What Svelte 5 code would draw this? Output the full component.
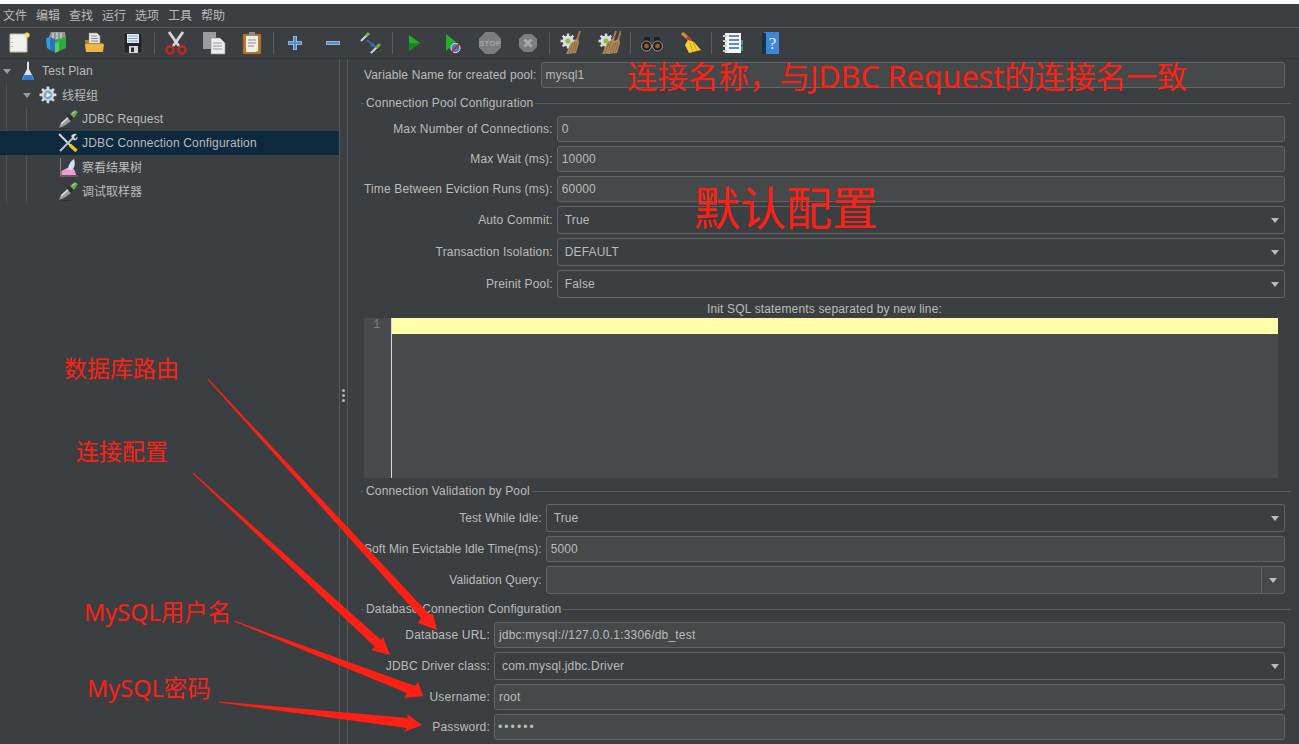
<script lang="ts">
  const menus = ['文件', '编辑', '查找', '运行', '选项', '工具', '帮助'];

  const poolRows = [
    { label: 'Max Number of Connections:', value: '0' },
    { label: 'Max Wait (ms):', value: '10000' },
    { label: 'Time Between Eviction Runs (ms):', value: '60000' },
    { label: 'Auto Commit:', value: 'True', select: true },
    { label: 'Transaction Isolation:', value: 'DEFAULT', select: true },
    { label: 'Preinit Pool:', value: 'False', select: true }
  ];

  const validationRows = [
    { label: 'Test While Idle:', value: 'True', select: true },
    { label: 'Soft Min Evictable Idle Time(ms):', value: '5000' },
    { label: 'Validation Query:', value: '', select: true, editable: true }
  ];

  const databaseRows = [
    { label: 'Database URL:', value: 'jdbc:mysql://127.0.0.1:3306/db_test' },
    { label: 'JDBC Driver class:', value: 'com.mysql.jdbc.Driver', select: true },
    { label: 'Username:', value: 'root' },
    { label: 'Password:', value: '••••••', secret: true }
  ];

  const arrows = [
    '208,378.5 429,614 433,614 437,630 418,623 421,618 207.5,379.5',
    '193,472.5 381,640 383,637 390,655 371,650 375,647 192.5,473.5',
    '234,620.5 415,686 418,682 423,696 404,698 407,693 234,621.5',
    '219,701.5 408,718 407,714 422,725 404,732 407,728 219,702.5'
  ];
</script>

{#snippet dropper()}
  <svg class="tree-icon" viewBox="0 0 20 20">
    <path d="M1 20 Q8 18 14 20 Z" fill="#2e3032" />
    <path d="M1 19 L3 14 L9 8 L13 12 L6 17 Z" fill="#9b9d9e" />
    <path d="M3 15 L10 9" stroke="#e4e4e4" stroke-width="1.2" />
    <path d="M9 7 L11 5 L15 9 L13 12 Z" fill="#2c2e30" />
    <path d="M12 5 L17 1 L20 3 L16 9 Z" fill="#68a84f" />
    <path d="M14 5 L17 2.5" stroke="#a6d58e" stroke-width="1.2" />
  </svg>
{/snippet}

{#snippet gear(color = '#d9dcde')}
  <g fill={color}>
    <circle cx="8" cy="8" r="5.5" />
    <g stroke={color} stroke-width="2.4">
      <path d="M8 0.5V15.5M0.5 8H15.5M2.7 2.7L13.3 13.3M13.3 2.7L2.7 13.3" />
    </g>
  </g>
{/snippet}

{#snippet broom(x = 0)}
  <g transform="translate({x} 0)">
    <path d="M21 0 L18 9" stroke="#a07c50" stroke-width="2" />
    <path d="M12 12 L19 7 L20 12 L17 22 L7 23 Z" fill="#b08a5a" />
    <path d="M10 22 L14 12M13 22 L16 11M15.5 21 L18 11" stroke="#8a6a42" stroke-width="1" />
  </g>
{/snippet}

<div class="app">
  <div class="menubar">
    {#each menus as m}
      <span class="menu-item">{m}</span>
    {/each}
  </div>

  <div class="toolbar">
    <span class="tool">
      <svg viewBox="0 0 24 24">
        <path d="M3 3H20V21H3Z" fill="#f2f2ea" stroke="#bdbdb0" />
        <path d="M5 7V8M5 11V12M5 15V16" stroke="#8f8f8f" />
        <circle cx="20" cy="4" r="2.6" fill="#f5dc60" />
      </svg>
    </span>
    <span class="tool">
      <svg viewBox="0 0 24 24">
        <path d="M4 6 L6 1 L20 1 L21 8 L21 12 L4 12 Z" fill="#8e9699" />
        <path d="M8 2 L8 8M12 1.5 L12 8M16 2 L16 8" stroke="#c8cdcf" stroke-width="1.4" />
        <path d="M1 7 L5 6 L5 19 L2 17 Z" fill="#2f9fdc" />
        <path d="M5 6 L10 8 L10 21 L5 19 Z" fill="#2f6fc0" />
        <path d="M10 9 L21 6 L21 17 L10 22 Z" fill="#2cab3e" />
        <path d="M10 12 L14 11 V20 L10 22 Z" fill="#56cc62" />
      </svg>
    </span>
    <span class="tool">
      <svg viewBox="0 0 24 24">
        <path d="M6 2H14L17 5V14H6Z" fill="#e8e8e8" stroke="#8e8e8e" stroke-width=".6" />
        <path d="M8 5H14M8 7.5H15M8 10H15" stroke="#8a8a8a" />
        <path d="M2 9H6V12H20V21H3Z" fill="#b9821f" />
        <path d="M2 13H21L20 21H3Z" fill="#eab64a" />
      </svg>
    </span>
    <span class="tool">
      <svg viewBox="0 0 24 24">
        <path d="M3 2H19L21 4V22H3Z" fill="#232426" stroke="#55585a" stroke-width=".6" />
        <path d="M6 3H18V12H6Z" fill="#e8eef4" />
        <path d="M7 5H17M7 7.5H17M7 10H17" stroke="#7fa2cf" />
        <path d="M8 15H17V22H8Z" fill="#d6d9db" />
        <path d="M10 16.5H13V21H10Z" fill="#2c2e30" />
      </svg>
    </span>
    <span class="sep"></span>
    <span class="tool">
      <svg viewBox="0 0 24 24">
        <path d="M5 1 L12 11 L15 15M19 1 L12 11 L9 15" stroke="#d6d6d6" stroke-width="2.8" fill="none" />
        <circle cx="6" cy="19" r="3.6" fill="none" stroke="#d6211f" stroke-width="2.2" />
        <circle cx="18" cy="19" r="3.6" fill="none" stroke="#d6211f" stroke-width="2.2" />
      </svg>
    </span>
    <span class="tool">
      <svg viewBox="0 0 24 24">
        <path d="M1 1H14V18H1Z" fill="#9a9c9e" />
        <path d="M9 7H18L23 12V23H9Z" fill="#ececec" stroke="#8f8f8f" stroke-width=".6" />
        <path d="M11 12H20M11 15H20M11 18H20" stroke="#9a9a9a" />
      </svg>
    </span>
    <span class="tool">
      <svg viewBox="0 0 24 24">
        <path d="M3 3H21V23H3Z" fill="#b87a2c" stroke="#7d5320" stroke-width=".6" />
        <path d="M9 1H15V5H9Z" fill="#8f8f8f" />
        <path d="M6 5H18V20L15 21H6Z" fill="#efefe8" />
        <path d="M8 9H16M8 12H16M8 15H14" stroke="#8a8a8a" />
      </svg>
    </span>
    <span class="sep"></span>
    <span class="tool">
      <svg viewBox="0 0 24 24">
        <path d="M12 5V19M5 12H19" stroke="#b9d4f0" stroke-width="3.6" />
        <path d="M12 5.5V18.5M5.5 12H18.5" stroke="#4a8fd4" stroke-width="2" />
      </svg>
    </span>
    <span class="tool">
      <svg viewBox="0 0 24 24">
        <path d="M5 12H19" stroke="#b9d4f0" stroke-width="3.6" />
        <path d="M5.5 12H18.5" stroke="#4a8fd4" stroke-width="2" />
      </svg>
    </span>
    <span class="tool">
      <svg viewBox="0 0 24 24">
        <path d="M2 10 L9 3" stroke="#d5d5d5" stroke-width="2" />
        <path d="M7 5 L10 2" stroke="#6fae5a" stroke-width="3" />
        <path d="M12 22 L19 15" stroke="#d5d5d5" stroke-width="2" />
        <path d="M17 17 L21 13" stroke="#6fae5a" stroke-width="3" />
        <path d="M8 9 L15 15" stroke="#2f78d0" stroke-width="1.6" />
        <path d="M16 16 L11.5 15 L15 11.5 Z" fill="#2f78d0" />
      </svg>
    </span>
    <span class="sep"></span>
    <span class="tool">
      <svg viewBox="0 0 24 24"><path d="M7 4 L18 12 L7 20 Z" fill="#22b02c" /><path d="M7 12 L18 12 L7 20 Z" fill="#0f8a1c" /></svg>
    </span>
    <span class="tool">
      <svg viewBox="0 0 24 24">
        <path d="M6 3 L16 11 L6 20 Z" fill="#22b02c" />
        <circle cx="15.5" cy="17" r="4.6" fill="#3f7fd0" stroke="#e8e8e8" />
        <path d="M12 20.5 L19 13.5" stroke="#d82420" stroke-width="1.8" />
      </svg>
    </span>
    <span class="tool">
      <svg viewBox="0 0 24 24">
        <path d="M7.5 1H16.5L23 7.5V16.5L16.5 23H7.5L1 16.5V7.5Z" fill="#7b7d7e" />
        <text x="12" y="15" class="stop-text">STOP</text>
      </svg>
    </span>
    <span class="tool">
      <svg viewBox="0 0 24 24">
        <path d="M8 3H16L21 8V16L16 21H8L3 16V8Z" fill="#7b7d7e" />
        <path d="M8.5 8.5L15.5 15.5M15.5 8.5L8.5 15.5" stroke="#a8a9aa" stroke-width="3" />
      </svg>
    </span>
    <span class="sep"></span>
    <span class="tool">
      <svg viewBox="0 0 24 24">
        <g transform="translate(1 2)">{@render gear()}</g>
        <circle cx="9" cy="10" r="2.6" fill="#8ebd3f" />
        {@render broom()}
      </svg>
    </span>
    <span class="tool">
      <svg viewBox="0 0 24 24">
        <g transform="translate(1 2)">{@render gear()}</g>
        <circle cx="9" cy="10" r="2.6" fill="#8ebd3f" />
        {@render broom(-2)}
        {@render broom(3)}
      </svg>
    </span>
    <span class="sep"></span>
    <span class="tool">
      <svg viewBox="0 0 24 24">
        <path d="M5 6H10V12H14V6H19L23 15H1Z" fill="#1f2021" />
        <circle cx="6.5" cy="15" r="5" fill="#1e1f20" stroke="#9a9a9a" />
        <circle cx="17.5" cy="15" r="5" fill="#1e1f20" stroke="#9a9a9a" />
        <circle cx="6.5" cy="15" r="2.4" fill="#9c5a2e" />
        <circle cx="17.5" cy="15" r="2.4" fill="#9c5a2e" />
      </svg>
    </span>
    <span class="tool">
      <svg viewBox="0 0 24 24">
        <path d="M4 2 L12 9" stroke="#c9913c" stroke-width="3.4" />
        <path d="M9 6 L14 11" stroke="#c8312c" stroke-width="3" />
        <path d="M10 9 L16 11 L23 19 L11 22 L7 14 Z" fill="#f2d230" />
        <path d="M12 12 L15 21M15 11 L19 20" stroke="#c9a51e" />
      </svg>
    </span>
    <span class="sep"></span>
    <span class="tool">
      <svg viewBox="0 0 24 24">
        <path d="M4 2H20V22H4Z" fill="#f4f6f8" />
        <path d="M20 9H22V14H20Z" fill="#3f8ed0" />
        <path d="M20 15H22V20H20Z" fill="#3da04a" />
        <path d="M2 5H6M2 10H6M2 15H6M2 20H6" stroke="#cfcfcf" stroke-width="2" />
        <path d="M8 5H18M8 9H18M8 13H18M8 17H18" stroke="#2f67b8" stroke-width="1.4" />
      </svg>
    </span>
    <span class="tool">
      <svg viewBox="0 0 24 24">
        <path d="M5 1H20V23H5Z" fill="#3f86d8" />
        <path d="M3 2H7V23H3Z" fill="#16304f" />
        <text x="13.5" y="18" class="help-text">?</text>
      </svg>
    </span>
  </div>

  <div class="main">
    <div class="tree">
      <div class="guide g1"></div>
      <div class="guide g2"></div>
      <div class="tree-row lv0">
        <span class="caret"></span>
        <svg class="tree-icon" viewBox="0 0 20 20">
          <path d="M10 0 L11 1 V8 L16 18 Q16 19 15 19 H5 Q4 19 4 18 L9 8 V2 Z" fill="#dfe3e6" />
          <path d="M6.5 14 H13.5 L16 18 Q16 19 15 19 H5 Q4 19 4 18 Z" fill="#2f78d0" />
        </svg>
        <span>Test Plan</span>
      </div>
      <div class="tree-row lv1">
        <span class="caret"></span>
        <svg class="tree-icon" viewBox="0 0 20 20">
          <g transform="translate(1 1) scale(1.12)">{@render gear()}</g>
          <circle cx="10" cy="10" r="4.4" fill="#7fa6cc" />
          <path d="M8.5 7.5 L13 10 L8.5 12.5 Z" fill="#f2f5f8" />
        </svg>
        <span class="zh">线程组</span>
      </div>
      <div class="tree-row lv2">{@render dropper()}<span>JDBC Request</span></div>
      <div class="tree-row lv2 selected">
        <svg class="tree-icon" viewBox="0 0 20 20">
          <path d="M1 1 L13 13" stroke="#e2e2e2" stroke-width="1.8" />
          <path d="M2 18 L15 5" stroke="#b9bbbc" stroke-width="2.2" />
          <path d="M13 3 Q15 0 19 1 L16 4 L17 6 L19.5 3.5 Q20 7 16 7.5 Z" fill="#d8d8d8" />
          <path d="M12 12 L18.5 18" stroke="#f0c419" stroke-width="3.4" />
        </svg>
        <span>JDBC Connection Configuration</span>
      </div>
      <div class="tree-row lv2">
        <svg class="tree-icon" viewBox="0 0 20 20">
          <path d="M2.5 1 V19 H20" stroke="#7f8182" fill="none" />
          <path d="M3.5 18 V14 L9 11 L14 10 L17 14 L18 18 Z" fill="#f29ad8" />
          <path d="M10 12 Q11 5 16 2 Q18 8 15 12 Q12 14 10 12 Z" fill="#cfe0f5" />
        </svg>
        <span class="zh">察看结果树</span>
      </div>
      <div class="tree-row lv2">{@render dropper()}<span class="zh">调试取样器</span></div>
    </div>

    <div class="splitter"><i></i><i></i><i></i></div>

    <div class="config">
      <div class="field-row top">
        <span class="label">Variable Name for created pool:</span>
        <span class="field">mysql1</span>
      </div>

      <div class="section-title"><span>Connection Pool Configuration</span></div>
      <div class="form-grid">
        {#each poolRows as r}
          <span class="label">{r.label}</span>
          {#if r.select}
            <span class="field select">{r.value}<b class="arrow"></b></span>
          {:else}
            <span class="field">{r.value}</span>
          {/if}
        {/each}
      </div>

      <div class="sql-label">Init SQL statements separated by new line:</div>
      <div class="editor">
        <div class="gutter">1</div>
        <div class="code"><div class="current-line"></div></div>
      </div>

      <div class="section-title tight"><span>Connection Validation by Pool</span></div>
      <div class="form-grid validation">
        {#each validationRows as r}
          <span class="label">{r.label}</span>
          {#if r.editable}
            <span class="field select editable"><b class="arrow"></b></span>
          {:else if r.select}
            <span class="field select">{r.value}<b class="arrow"></b></span>
          {:else}
            <span class="field">{r.value}</span>
          {/if}
        {/each}
      </div>

      <div class="section-title"><span>Database Connection Configuration</span></div>
      <div class="form-grid db">
        {#each databaseRows as r}
          <span class="label">{r.label}</span>
          {#if r.select}
            <span class="field select">{r.value}<b class="arrow"></b></span>
          {:else}
            <span class="field" class:secret={r.secret}>{r.value}</span>
          {/if}
        {/each}
      </div>
    </div>
  </div>

  <!-- red notes drawn on top of the screenshot -->
  <svg class="arrows" viewBox="0 0 1299 744">
    {#each arrows as pts}
      <polygon points={pts} fill="#ff2015" />
    {/each}
  </svg>
  <span class="note n-name">连接名称，与JDBC Request的连接名一致</span>
  <span class="note n-default">默认配置</span>
  <span class="note n-route">数据库路由</span>
  <span class="note n-conn">连接配置</span>
  <span class="note n-user">MySQL用户名</span>
  <span class="note n-pass">MySQL密码</span>
</div>

<style>
  :global(body) {
    margin: 0;
    background: #ffffff;
  }

  .app {
    position: relative;
    width: 1299px;
    height: 744px;
    padding-top: 4px;
    box-sizing: border-box;
    overflow: hidden;
    display: flex;
    flex-direction: column;
    background: #3c3f41;
    background-clip: content-box;
    color: #bbbbbb;
    font: 12px "Liberation Sans", "Noto Sans CJK SC", sans-serif;
    letter-spacing: 0.16px;
  }

  .menubar {
    padding: 0 0 2px 3px;
    height: 21px;
    display: flex;
    align-items: center;
    gap: 9px;
    border-bottom: 1px solid #555759;
    flex: none;
    letter-spacing: 0;
  }

  .toolbar {
    height: 30px;
    display: flex;
    align-items: center;
    border-bottom: 1px solid #323436;
    flex: none;
  }

  .tool {
    width: 38px;
    display: flex;
    justify-content: center;
    flex: none;
  }

  .tool svg {
    width: 24px;
    height: 24px;
    display: block;
  }

  .sep {
    width: 5px;
    height: 22px;
    flex: none;
    display: flex;
    justify-content: center;
  }

  .sep::after {
    content: '';
    width: 1px;
    background: #5a5c5e;
  }

  .stop-text {
    font: bold 8px "Liberation Sans", sans-serif;
    text-anchor: middle;
    fill: #a3a5a6;
  }

  .help-text {
    font: 17px "Liberation Serif", serif;
    text-anchor: middle;
    fill: #e8f0fa;
  }

  .main {
    flex: 1;
    display: flex;
    min-height: 0;
  }

  /* ── Tree ── */
  .tree {
    position: relative;
    width: 339px;
    flex: none;
    border-right: 1px solid #555759;
  }

  .guide {
    position: absolute;
    width: 1px;
    background: #4f5254;
  }

  .g1 {
    left: 6px;
    top: 24px;
    height: 120px;
  }

  .g2 {
    left: 26px;
    top: 48px;
    height: 96px;
  }

  .tree-row {
    position: relative;
    height: 24px;
    display: flex;
    align-items: center;
    gap: 4px;
    white-space: nowrap;
  }

  .zh {
    margin-top: -2px;
    letter-spacing: 0;
  }

  .lv0 {
    padding-left: 18px;
  }

  .lv1 {
    padding-left: 38px;
  }

  .lv2 {
    padding-left: 58px;
  }

  .selected {
    background: #0d293e;
  }

  .caret {
    position: absolute;
    width: 0;
    height: 0;
    border-left: 4px solid transparent;
    border-right: 4px solid transparent;
    border-top: 5px solid #9a9c9e;
    top: 10px;
  }

  .lv0 .caret {
    left: 3px;
  }

  .lv1 .caret {
    left: 23px;
  }

  .tree-icon {
    width: 20px;
    height: 20px;
    flex: none;
  }

  .splitter {
    width: 8px;
    flex: none;
    display: flex;
    flex-direction: column;
    align-items: center;
    justify-content: center;
    gap: 2px;
    padding-bottom: 12px;
    box-sizing: border-box;
    border-right: 1px solid #555759;
  }

  .splitter i {
    width: 3px;
    height: 3px;
    border-radius: 50%;
    background: #b4b6b8;
  }

  /* ── Config form ── */
  .config {
    flex: 1;
    min-width: 0;
    padding: 3px 14px 0 16px;
    box-sizing: border-box;
  }

  .field-row {
    display: flex;
    align-items: center;
    gap: 4px;
    letter-spacing: 0.13px;
  }

  .form-grid {
    display: grid;
    grid-template-columns: auto 1fr;
    column-gap: 4px;
    row-gap: 4px;
    align-items: center;
  }

  .form-grid.validation {
    letter-spacing: 0.07px;
  }

  .form-grid.db {
    grid-template-columns: 126px 1fr;
    letter-spacing: 0.2px;
  }

  .label {
    text-align: right;
    white-space: nowrap;
  }

  .field {
    flex: 1;
    position: relative;
    height: 26px;
    line-height: 25px;
    padding-left: 4px;
    box-sizing: border-box;
    background: #45494a;
    border: 1px solid #646464;
    border-radius: 3px;
    white-space: nowrap;
  }

  .select {
    height: 28px;
    line-height: 27px;
    padding-left: 7px;
    background: #3c3f41;
  }

  .editable {
    background: #45494a;
  }

  .editable::after {
    content: '';
    position: absolute;
    right: 22px;
    top: 0;
    bottom: 0;
    width: 1px;
    background: #646464;
  }

  .arrow {
    position: absolute;
    right: 5px;
    top: 11px;
    width: 0;
    height: 0;
    border-left: 4px solid transparent;
    border-right: 4px solid transparent;
    border-top: 5px solid #bbbbbb;
  }

  .editable .arrow {
    right: 7px;
  }

  .secret {
    letter-spacing: 2.1px;
    padding-left: 3px;
  }

  .section-title {
    height: 14px;
    line-height: 14px;
    margin: 8px -6px 6px -3px;
    display: flex;
    align-items: center;
    gap: 2px;
    white-space: nowrap;
  }

  .tight {
    margin-top: 6px;
  }

  .section-title::before {
    content: '';
    width: 3px;
    height: 1px;
    background: #5a5c5e;
  }

  .section-title::after {
    content: '';
    flex: 1;
    height: 1px;
    background: #5a5c5e;
  }

  .sql-label {
    margin-top: 4px;
    height: 14px;
    line-height: 14px;
    text-align: center;
  }

  .editor {
    margin: 2px 7px 0 0;
    height: 160px;
    display: flex;
    background: #484b4c;
  }

  .gutter {
    width: 28px;
    box-sizing: border-box;
    padding: 0 0 0 9px;
    color: #7d7f80;
    font: 12px/15px "Liberation Mono", monospace;
    border-right: 1px solid #d8d8d8;
    flex: none;
  }

  .code {
    flex: 1;
  }

  .current-line {
    height: 16px;
    background: #ffffaa;
  }

  /* ── Annotations ── */
  .arrows {
    position: absolute;
    left: 0;
    top: 0;
    width: 1299px;
    height: 744px;
    pointer-events: none;
  }

  .note {
    position: absolute;
    color: #ff2015;
    font-family: "Noto Sans", "Noto Sans CJK SC", sans-serif;
    letter-spacing: 0;
    line-height: 1;
    white-space: nowrap;
  }

  .n-name {
    left: 627px;
    top: 61px;
    font-size: 30.5px;
  }

  .n-default {
    left: 694px;
    top: 184px;
    font-size: 46px;
  }

  .n-route {
    left: 64px;
    top: 357px;
    font-size: 23px;
  }

  .n-conn {
    left: 76px;
    top: 440px;
    font-size: 23px;
  }

  .n-user {
    left: 84px;
    top: 601px;
    font-size: 23.5px;
  }

  .n-pass {
    left: 87px;
    top: 677px;
    font-size: 23.5px;
  }
</style>
